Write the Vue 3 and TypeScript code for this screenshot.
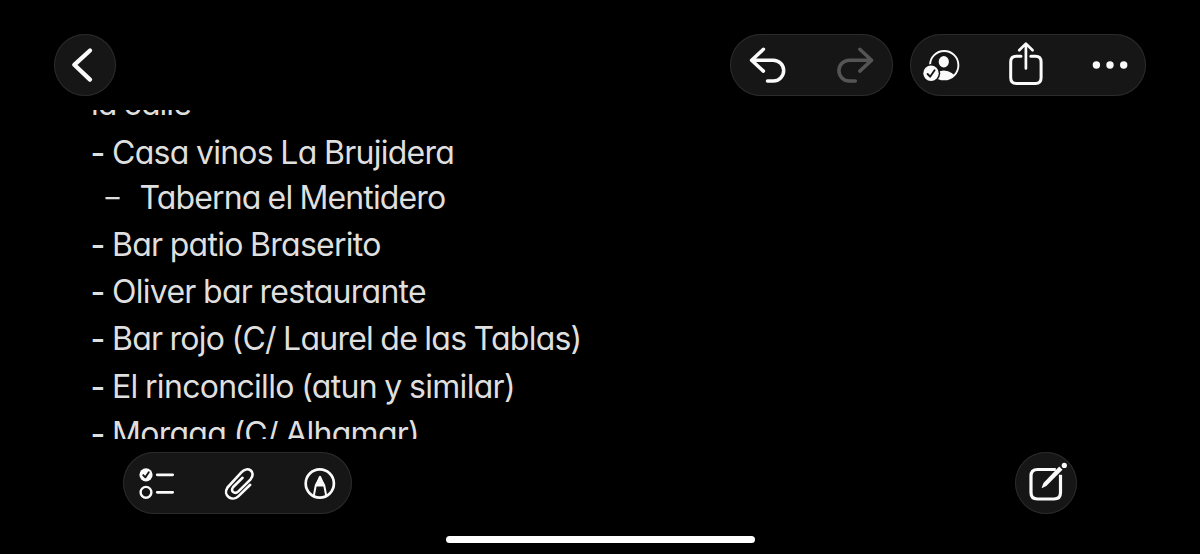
<script setup lang="ts">
interface NoteLine {
  dash: string
  text: string
  kind: string
}

const lines: NoteLine[] = [
  { dash: '', text: 'la calle', kind: 'plain' },
  { dash: '-', text: 'Casa vinos La Brujidera', kind: 'casa' },
  { dash: '–', text: 'Taberna el Mentidero', kind: 'nested' },
  { dash: '-', text: 'Bar patio Braserito', kind: 'patio' },
  { dash: '-', text: 'Oliver bar restaurante', kind: 'oliver' },
  { dash: '-', text: 'Bar rojo (C/ Laurel de las Tablas)', kind: 'rojo' },
  { dash: '-', text: 'El rinconcillo (atun y similar)', kind: 'rinconcillo' },
  { dash: '-', text: 'Moraga (C/ Alhamar)', kind: 'moraga' },
]
</script>

<template>
  <main class="screen">
    <header class="topbar">
      <button class="glass round" aria-label="Back">
        <svg viewBox="54 34 62 62"><path class="w4" d="M90 50.5 74.3 64.8 90 79.6" /></svg>
      </button>
      <div class="groups">
        <div class="glass history">
          <button aria-label="Undo">
            <svg viewBox="730 34 81 62"><path class="w35" d="M763.4 49.3 751.6 60.2 763.4 71.1M752.5 60.2H773.3A10.4 10.4 0 0 1 773.3 81H767.5" /></svg>
          </button>
          <button aria-label="Redo" disabled>
            <svg viewBox="811 34 82 62"><path class="w35" d="M859.8 49.3 871.6 60.2 859.8 71.1M871 60.2H849.3A10.4 10.4 0 0 0 849.3 81H855.3" /></svg>
          </button>
        </div>
        <div class="glass actions">
          <button aria-label="Collaborators">
            <svg viewBox="910 34 73 62">
              <defs><clipPath id="avatar"><circle cx="944.2" cy="65.2" r="14.2" /></clipPath></defs>
              <circle cx="944.2" cy="65.2" r="14.2" stroke-width="1.9" />
              <g clip-path="url(#avatar)" class="solid">
                <ellipse cx="943.8" cy="61.8" rx="5.1" ry="5.7" />
                <ellipse cx="943.8" cy="79" rx="11.2" ry="8.6" />
              </g>
              <circle class="backing" cx="931" cy="73.3" r="9.2" />
              <circle class="solid" cx="931" cy="73.3" r="7.7" />
              <path class="tick" d="M927.6 74 930.1 76.7 934.6 70.3" />
            </svg>
          </button>
          <button aria-label="Share">
            <svg viewBox="983 34 84 62">
              <path stroke-width="3" d="M1021 56.3H1016.3Q1010.7 56.3 1010.7 62V77.7Q1010.7 83.4 1016.3 83.4H1035.5Q1041.1 83.4 1041.1 77.7V62Q1041.1 56.3 1035.5 56.3H1030.8" />
              <path stroke-width="2.7" d="M1025.9 68.5V44.5M1019.2 50.2 1025.9 43.6 1032.6 50.2" />
            </svg>
          </button>
          <button aria-label="More">
            <svg viewBox="1067 34 79 62"><g class="solid"><circle cx="1096.4" cy="65" r="3.7" /><circle cx="1110" cy="65" r="3.7" /><circle cx="1123.7" cy="65" r="3.7" /></g></svg>
          </button>
        </div>
      </div>
    </header>

    <section class="note">
      <div class="copy">
        <p v-for="line in lines" :key="line.kind" :class="['line', line.kind]">
          <span v-if="line.dash" class="dash">{{ line.dash }}</span><span class="text">{{ line.text }}</span>
        </p>
      </div>
    </section>

    <footer class="bottombar">
      <div class="glass tools">
        <button aria-label="Checklist">
          <svg viewBox="123 452 76 62">
            <circle class="solid" cx="146" cy="474.8" r="6.6" />
            <path class="tick" d="M143.2 475.1 145.3 477.4 148.8 472.2" />
            <circle cx="146" cy="492.3" r="5.4" stroke-width="2.4" />
            <path stroke-width="2.7" d="M157.2 474.8H172.7M157.2 492.3H172.7" />
          </svg>
        </button>
        <button aria-label="Attach">
          <svg viewBox="199 452 81 62"><path stroke-width="2.6" d="M250.2 484.8 238.3 496.4C232.3 502 222.3 495.7 227.5 487.5L241.6 472.2C247.6 465.5 256.7 471.7 250.6 479.3L238.4 491.4C234.7 494.8 229.8 491.2 233.2 487L242.6 477.8" /></svg>
        </button>
        <button aria-label="Markup">
          <svg viewBox="280 452 72 62">
            <circle cx="319.8" cy="483.5" r="14.1" stroke-width="2.7" />
            <path stroke-width="2" d="M313.8 495.7 315.8 485.3 320 477.5 324.2 485.3 326.2 495.7M315.7 485.6H324.3" />
            <path class="solid" d="M315.3 486 319 476.5Q320 475 321 476.5L324.7 486Z" />
          </svg>
        </button>
      </div>
      <button class="glass round" aria-label="New note">
        <svg viewBox="1015 452 62 62">
          <path stroke-width="3.2" stroke-linecap="butt" d="M1055.8 469.5H1037.5Q1031 469.5 1031 476V492.5Q1031 499 1037.5 499H1054Q1060.5 499 1060.5 492.5V474.8" />
          <path class="solid" d="M1059.2 466.5 1062.5 469.8 1046.3 486 1042.2 487.9Q1041.5 488 1041.8 487.2L1043.5 482.9Z" />
          <circle class="solid" cx="1064.3" cy="465.4" r="2.6" />
        </svg>
      </button>
    </footer>
    <div class="home-indicator"></div>
  </main>
</template>

<style>
body { background: #000; }
</style>

<style scoped>
.screen {
  box-sizing: border-box;
  width: 1200px;
  height: 554px;
  padding-top: 34px;
  overflow: hidden;
  display: flex;
  flex-direction: column;
  background: #000;
  font-family: Inter, "Liberation Sans", sans-serif;
}
.topbar {
  display: flex;
  justify-content: space-between;
  height: 62px;
  margin: 0 54px;
}
.groups { display: flex; gap: 17px; }
.glass {
  display: flex;
  height: 62px;
  border-radius: 31px;
  background: #161616;
  box-shadow: inset 0 0 0 1px #2b2b2b;
}
button { padding: 0; border: 0; background: none; display: block; }
button.glass { background: #161616; }
.round { width: 62px; }
svg {
  display: block;
  width: 100%;
  height: 62px;
  fill: none;
  stroke: #fafafa;
  stroke-linecap: round;
  stroke-linejoin: round;
}
.history button:nth-child(1) { width: 81px; }
.history button:nth-child(2) { width: 82px; }
.history button:disabled svg { stroke: #555; }
.actions button:nth-child(1) { width: 73px; }
.actions button:nth-child(2) { width: 84px; }
.actions button:nth-child(3) { width: 79px; }
.tools button:nth-child(1) { width: 76px; }
.tools button:nth-child(2) { width: 81px; }
.tools button:nth-child(3) { width: 72px; }
.w4 { stroke-width: 4.3; }
.w35 { stroke-width: 3.5; }
.solid { fill: #fafafa; stroke: none; }
.backing { fill: #161616; stroke: none; }
.tick { stroke: #161616; stroke-width: 1.9; }
.note {
  height: 328.5px;
  margin-top: 14px;
  padding-left: 91px;
  overflow: hidden;
}
.copy { margin-top: -29.6px; }
.line {
  display: flex;
  margin: 0;
  height: 47.2px;
  line-height: 47.2px;
  font-size: 32px;
  font-feature-settings: "cv11";
  letter-spacing: -0.73px;
  word-spacing: -0.9px;
  color: #dfdfdf;
  white-space: pre;
}
.plain { height: 48.4px; letter-spacing: -0.95px; }
.rojo { letter-spacing: -0.77px; }
.rinconcillo { letter-spacing: -0.69px; }
.dash {
  width: 21px;
  margin-left: -0.5px;
  margin-right: 0.5px;
  font-weight: 500;
}
.nested { height: 46.7px; margin-top: -1.7px; letter-spacing: -0.88px; }
.nested .dash { width: 34px; margin-left: 14.5px; margin-right: 0; font-weight: 400; font-size: 28px; }
.bottombar {
  display: flex;
  justify-content: space-between;
  height: 62px;
  margin: 13.5px 123px 0;
}
.home-indicator {
  width: 309px;
  height: 7px;
  margin: 21.6px auto 0;
  border-radius: 4px;
  background: #fff;
}
</style>
